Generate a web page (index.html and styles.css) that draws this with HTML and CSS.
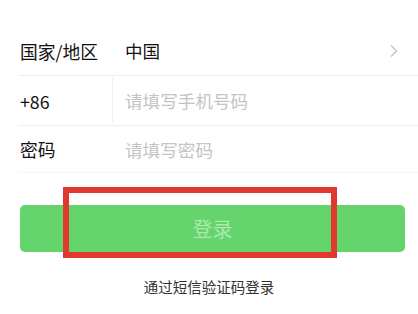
FILE: index.html
```html
<!DOCTYPE html>
<html lang="zh">
<head>
<meta charset="utf-8">
<link rel="stylesheet" href="styles.css">
</head>
<body>
<div class="page">
  <div class="form">
    <div class="row">
      <div class="label">国家/地区</div>
      <div class="value">中国</div>
      <svg class="chev" width="8" height="14" viewBox="0 0 8 14"><path d="M1 1.5 L6.5 7 L1 12.5" fill="none" stroke="#c3c3c3" stroke-width="1.4"/></svg>
    </div>
    <div class="row">
      <div class="label sep">+86</div>
      <div class="value ph">请填写手机号码</div>
    </div>
    <div class="row">
      <div class="label">密码</div>
      <div class="value ph">请填写密码</div>
    </div>
  </div>
  <div class="btn-wrap">
    <div class="btn">登录</div>
    <div class="mark"></div>
  </div>
  <div class="link">通过短信验证码登录</div>
</div>
</body>
</html>
```
FILE: styles.css
```css
html, body {
  margin: 0;
  padding: 0;
  background: #fff;
}
body {
  width: 418px;
  height: 314px;
  overflow: hidden;
  font-family: "Noto Sans CJK SC", "Noto Sans", sans-serif;
  color: #111;
}
.page {
  padding-top: 26px;
}
.form {
  padding-left: 18px;
}
.row {
  display: flex;
  align-items: stretch;
  height: 49px;
  border-bottom: 1px solid #efefef;
  position: relative;
}
.row:last-child {
  border-bottom-color: #f6f6f6;
  height: 46px;
}
.label {
  width: 95px;
  display: flex;
  align-items: center;
  padding-left: 2px;
  font-size: 17.8px;
  box-sizing: border-box;
}
.label.sep {
  border-right: 1px solid #efefef;
  margin: 2px 0;
}
.value {
  flex: 1;
  display: flex;
  align-items: center;
  padding-left: 12px;
  font-size: 17.6px;
}
.value.ph {
  color: #c4c4c4;
}
.chev {
  align-self: center;
  margin-right: 20px;
}
.btn-wrap {
  position: relative;
  margin: 32px 13px 0 20px;
}
.btn {
  height: 47px;
  background: #66d46d;
  border-radius: 5px;
  color: #a9eaad;
  font-size: 20px;
  display: flex;
  align-items: center;
  justify-content: center;
}
.mark {
  position: absolute;
  left: 43px;
  top: -18px;
  width: 274px;
  height: 71px;
  box-sizing: border-box;
  border: 6px solid #e2392f;
}
.link {
  margin-top: 24px;
  text-align: center;
  font-size: 14.5px;
  color: #333;
}
```
